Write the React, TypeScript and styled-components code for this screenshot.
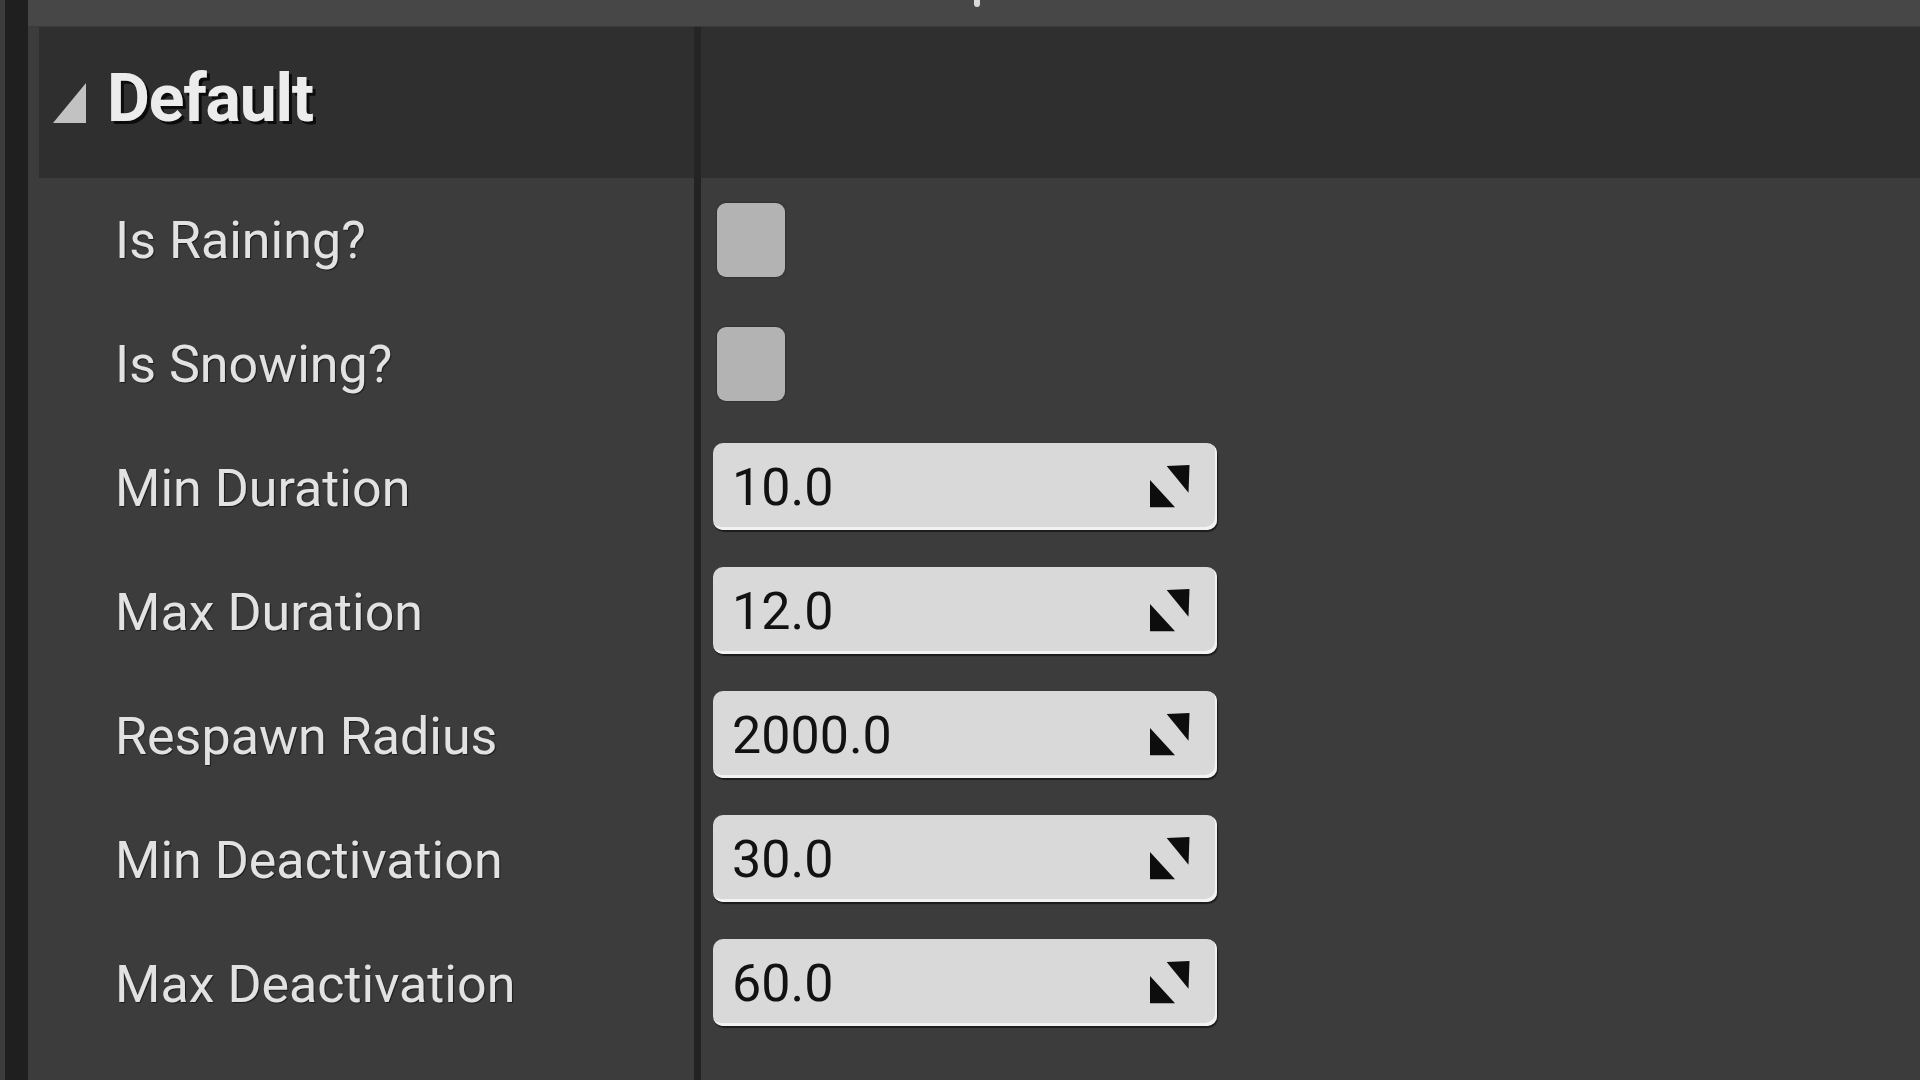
import React from "react";
import styled, { createGlobalStyle } from "styled-components";

const GlobalStyle = createGlobalStyle`
  html, body {
    margin: 0;
    padding: 0;
    background: #3c3c3c;
    overflow: hidden;
  }
  #root {
    height: 100vh;
  }
`;

const Screen = styled.div`
  display: flex;
  height: 1080px;
  width: 1920px;
  background: #3c3c3c;
  font-family: Roboto, "Liberation Sans", sans-serif;
`;

const Gutter = styled.div`
  width: 23px;
  margin-left: 5px;
  background: #1f1f1f;
  flex: none;
`;

const Main = styled.div`
  flex: 1;
  display: flex;
  flex-direction: column;
  min-width: 0;
`;

const TopBar = styled.div`
  position: relative;
  height: 26px;
  background: #474747;
  border-bottom: 1px solid #3a3a3a;
  flex: none;
`;

const CutGlyph = styled.span`
  position: absolute;
  left: 946px;
  top: 0;
  width: 6px;
  height: 7px;
  border-radius: 0 0 3px 3px;
  background: #d8d8d8;
  filter: blur(0.6px);
`;

const Grid = styled.div<{ $inset?: number }>`
  display: grid;
  grid-template-columns: ${(p) => 666 - (p.$inset ?? 0)}px 7px 1fr;
  margin-left: ${(p) => p.$inset ?? 0}px;
`;

const HeaderRow = styled(Grid)`
  height: 151px;
  background: #2f2f2f;
  flex: none;
`;

const HeaderCell = styled.div`
  display: flex;
  align-items: center;
  padding-left: 14px;
  gap: 21px;
`;

const Title = styled.span`
  font-weight: 700;
  font-size: 66px;
  letter-spacing: -1.2px;
  line-height: 1;
  color: #ececec;
  text-shadow: 3px 3px 0 #0b0b0b;
  margin-top: -8px;
`;

const Divider = styled.div<{ $dark?: boolean }>`
  background: ${(p) => (p.$dark ? "#252525" : "#232323")};
`;

const Row = styled(Grid)`
  height: 124px;
  flex: none;
`;

const Filler = styled(Grid)`
  flex: 1;
`;

const Label = styled.div`
  display: flex;
  align-items: center;
  padding-left: 87px;
  font-size: 52px;
  color: #e2e2e2;
  text-shadow: 1px 1px 1px rgba(0, 0, 0, 0.55);
  white-space: nowrap;
`;

const ValueCell = styled.div<{ $pad: number }>`
  display: flex;
  align-items: center;
  padding-left: ${(p) => p.$pad}px;
`;

const Checkbox = styled.div`
  width: 68px;
  height: 74px;
  border-radius: 9px;
  background: #b3b3b3;
  box-shadow: 0 0 1px 1px rgba(40, 40, 40, 0.5);
`;

const NumberBox = styled.div`
  width: 504px;
  height: 87px;
  box-sizing: border-box;
  border-radius: 10px;
  background: #d9d9d9;
  display: flex;
  align-items: center;
  justify-content: space-between;
  padding: 2px 27px 0 19px;
  box-shadow: inset -2px -3px 0 #f2f2f2, 1px 2px 1px rgba(0, 0, 0, 0.55);
  margin-top: -3px;
`;

const NumberText = styled.span`
  font-size: 52px;
  color: #121212;
  line-height: 1;
`;

const SpinIcon = () => (
  <svg width="40" height="43" viewBox="0 0 40 43" style={{ marginTop: -2 }}>
    <polygon points="16.7,1 39.5,0 38.5,27.7" fill="#0d0d0d" />
    <polygon points="0,15 0,42.3 25,42.3" fill="#0d0d0d" />
  </svg>
);

const Arrow = () => (
  <svg width="33" height="40" viewBox="0 0 33 40">
    <polygon points="33,0 33,40 0,40" fill="#c2c2c2" />
  </svg>
);

type Prop =
  | { label: string; kind: "bool" }
  | { label: string; kind: "num"; value: string };

const props: Prop[] = [
  { label: "Is Raining?", kind: "bool" },
  { label: "Is Snowing?", kind: "bool" },
  { label: "Min Duration", kind: "num", value: "10.0" },
  { label: "Max Duration", kind: "num", value: "12.0" },
  { label: "Respawn Radius", kind: "num", value: "2000.0" },
  { label: "Min Deactivation", kind: "num", value: "30.0" },
  { label: "Max Deactivation", kind: "num", value: "60.0" },
];

export default function App() {
  return (
    <>
      <GlobalStyle />
      <Screen>
        <Gutter />
        <Main>
          <TopBar>
            <CutGlyph />
          </TopBar>
          <HeaderRow $inset={11}>
            <HeaderCell>
              <Arrow />
              <Title>Default</Title>
            </HeaderCell>
            <Divider $dark />
            <div />
          </HeaderRow>
          {props.map((p) => (
            <Row key={p.label}>
              <Label>{p.label}</Label>
              <Divider />
              {p.kind === "bool" ? (
                <ValueCell $pad={16}>
                  <Checkbox />
                </ValueCell>
              ) : (
                <ValueCell $pad={12}>
                  <NumberBox>
                    <NumberText>{p.value}</NumberText>
                    <SpinIcon />
                  </NumberBox>
                </ValueCell>
              )}
            </Row>
          ))}
          <Filler>
            <div />
            <Divider />
            <div />
          </Filler>
        </Main>
      </Screen>
    </>
  );
}
